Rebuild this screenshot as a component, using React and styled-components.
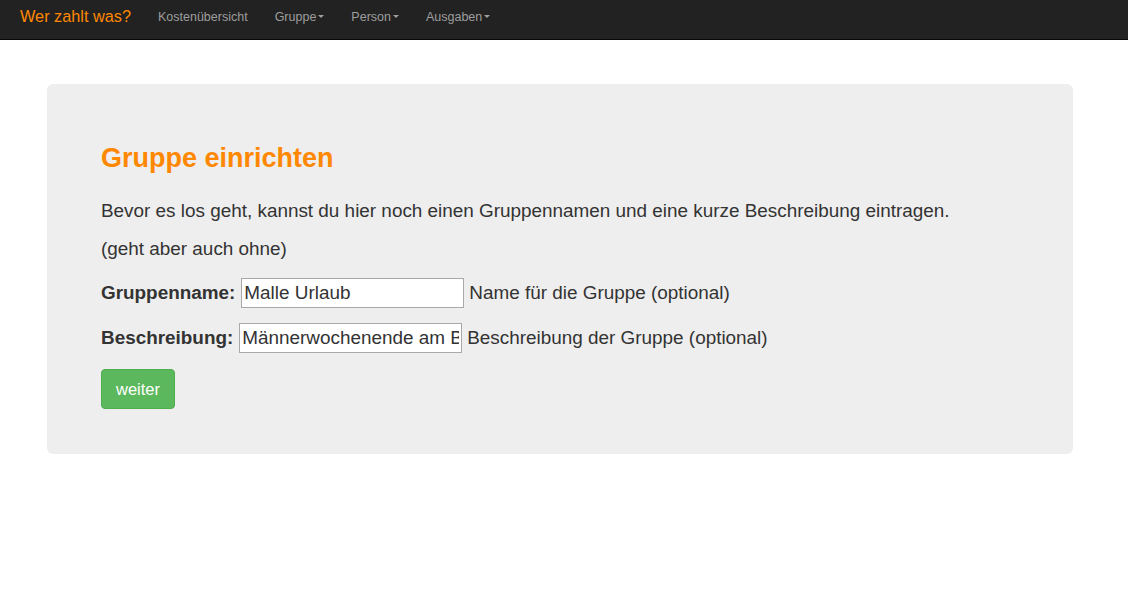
import styled, { createGlobalStyle } from "styled-components";

const GlobalStyle = createGlobalStyle`
  body {
    margin: 0;
    background: #fff;
    font-family: "Liberation Sans", Arial, sans-serif;
    color: #333;
  }
`;

const Navbar = styled.nav`
  display: flex;
  align-items: center;
  height: 40px;
  box-sizing: border-box;
  padding: 0 0 6px 20px;
  background: #222;
  border-bottom: 1px solid #080808;
`;

const Brand = styled.a`
  color: #ff8800;
  font-size: 16.3px;
  margin-right: 27px;
  text-decoration: none;
`;

const NavLink = styled.a`
  color: #9d9d9d;
  font-size: 12.5px;
  margin-right: 27px;
  text-decoration: none;
  display: flex;
  align-items: center;
`;

const Caret = styled.span`
  display: inline-block;
  width: 0;
  height: 0;
  margin-left: 2px;
  border-top: 3px solid #9d9d9d;
  border-left: 3px solid transparent;
  border-right: 3px solid transparent;
`;

const Main = styled.main`
  padding: 44px 55px 0 47px;
`;

const Jumbotron = styled.section`
  background: #eee;
  border-radius: 6px;
  padding: 59px 54px 0;
  height: 370px;
  box-sizing: border-box;
`;

const Title = styled.h1`
  margin: 0 0 19px;
  color: #ff8800;
  font-size: 27px;
  line-height: 30px;
  font-weight: bold;
`;

const Text = styled.p`
  margin: 0;
  font-size: 18.9px;
  line-height: 38px;
`;

const Form = styled.form`
  display: flex;
  flex-direction: column;
  align-items: flex-start;
  margin-top: 2px;
`;

const Row = styled.div`
  display: flex;
  align-items: center;
  font-size: 18.9px;
  height: 45px;
`;

const Label = styled.label`
  font-weight: bold;
  margin-right: 6px;
`;

const Input = styled.input`
  width: 223px;
  height: 30px;
  box-sizing: border-box;
  border: 1px solid #a9a9a9;
  padding: 1px 2px;
  font-family: "Liberation Sans", Arial, sans-serif;
  font-size: 18.9px;
  color: #333;
  margin-right: 5px;
`;

const Button = styled.button`
  margin-top: 9px;
  width: 74px;
  height: 40px;
  padding: 0;
  background: #5cb85c;
  border: 1px solid #4cae4c;
  border-radius: 4px;
  color: #fff;
  font-family: "Liberation Sans", Arial, sans-serif;
  font-size: 16.5px;
`;

export default function App() {
  return (
    <>
      <GlobalStyle />
      <Navbar>
        <Brand href="#">Wer zahlt was?</Brand>
        <NavLink href="#">Kostenübersicht</NavLink>
        <NavLink href="#">Gruppe<Caret /></NavLink>
        <NavLink href="#">Person<Caret /></NavLink>
        <NavLink href="#">Ausgaben<Caret /></NavLink>
      </Navbar>
      <Main>
        <Jumbotron>
          <Title>Gruppe einrichten</Title>
          <Text>
            Bevor es los geht, kannst du hier noch einen Gruppennamen und eine kurze Beschreibung eintragen.
          </Text>
          <Text>(geht aber auch ohne)</Text>
          <Form onSubmit={(e) => e.preventDefault()}>
            <Row>
              <Label>Gruppenname:</Label>
              <Input defaultValue="Malle Urlaub" />
              Name für die Gruppe (optional)
            </Row>
            <Row>
              <Label>Beschreibung:</Label>
              <Input defaultValue="Männerwochenende am Ballermann" />
              Beschreibung der Gruppe (optional)
            </Row>
            <Button type="submit">weiter</Button>
          </Form>
        </Jumbotron>
      </Main>
    </>
  );
}
